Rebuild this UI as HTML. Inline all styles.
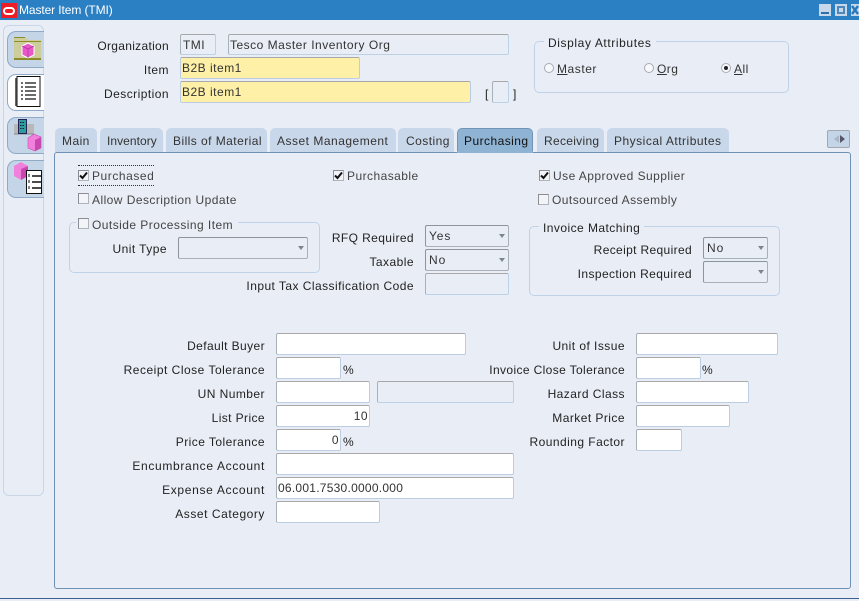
<!DOCTYPE html>
<html><head><meta charset="utf-8"><style>
html,body{margin:0;padding:0}
body{width:859px;height:601px;overflow:hidden;position:relative;background:#e9eef6;font:12px/14px "Liberation Sans",sans-serif;color:#222;letter-spacing:.45px}
div,span,svg{position:absolute;box-sizing:border-box}
.l{white-space:nowrap;text-align:right;height:14px}
.t{white-space:nowrap;height:14px}
.f{background:#fff;border:1px solid #bccde3;border-top-color:#a8a8a8;border-left-color:#a8b0b8;border-radius:2px;height:22px;padding:3px 2px;white-space:nowrap;color:#333}
.ro{background:#e9eef6;border-color:#bcd0e6;border-top-color:#a8a8a8;border-left-color:#a8b0b8;color:#333}
.y{background:#fff0a8;border-color:#bccde3;border-top-color:#a8a8a8;padding-left:1px;letter-spacing:.5px}
.s{background:#e9eef6;border:1px solid #a8b0b8;border-left-color:#8c949c;border-top-color:#8c949c;border-radius:2px;height:22px;padding:3px 3px;color:#333;letter-spacing:.9px}
.s:after{content:"";position:absolute;right:3px;top:8px;border:3.500px solid transparent;border-top:4px solid #7c8490;border-bottom:0}
.g{border:1px solid #c0d2e8;border-radius:5px}
.tab{top:128px;height:24px;background:#c8d7e9;border-radius:5px 5px 0 0;padding-top:6px;padding-left:7px;color:#333;white-space:nowrap}
.c{width:11px;height:11px;background:#f2f4f8;border:1px solid #b0b4ba;border-top-color:#8a8e94;border-left-color:#8a8e94}
.c.o svg{left:0;top:0}
.r{width:10px;height:10px;border-radius:50%;background:#f6f8fb;border:1px solid #a8acb2}
.st{left:7px;width:37px;height:37px;background:#c5d5e8;border:1px solid #8fa9c6;border-right:0;border-radius:9px 0 0 9px}
.lb{color:#444}
u{text-decoration:underline}
</style></head><body>
<!-- title bar -->
<div style="left:0;top:0;width:859px;height:20px;background:#2b80c3"></div>
<div style="left:1px;top:3px;width:16px;height:15px;background:#ee1c25"></div>
<div style="left:3px;top:7px;width:12px;height:8px;border:2px solid #fff;border-radius:4px"></div>
<div class="t" style="left:19px;top:3px;color:#fff;letter-spacing:-.1px">Master Item (TMI)</div>
<div style="left:819px;top:4px;width:12px;height:12px;background:#c8d8ea"></div>
<div style="left:821px;top:12px;width:8px;height:2px;background:#2b70aa"></div>
<div style="left:835px;top:4px;width:12px;height:12px;background:#c8d8ea"></div>
<div style="left:837px;top:6px;width:8px;height:8px;border:2px solid #4c88bc"></div>
<div style="left:851px;top:4px;width:8px;height:12px;background:#c8d8ea"></div>
<svg style="left:851px;top:4px" width="8" height="12"><path d="M1 2L7 10M7 2L1 10" stroke="#2b78b8" stroke-width="2.400"/></svg>

<!-- side rail -->
<div style="left:3px;top:25px;width:41px;height:471px;border:1px solid #c8d6e8;border-radius:6px"></div>
<div class="st" style="top:31px"></div>
<div class="st" style="top:74px;background:#fff"></div>
<div class="st" style="top:117px"></div>
<div class="st" style="top:160px;height:38px"></div>
<svg style="left:0;top:25px" width="44" height="180" viewBox="0 25 44 180">
<path d="M14 60V37h12l2 3h13v20z" fill="#cdcd9c"/><path d="M14 37.500h11M14 41.500h27" stroke="#8c8c28" fill="none"/><rect x="14" y="58" width="27" height="2" fill="#8c8c28"/>
<path d="M22 46l6-3 6 3v9l-6 3-6-3z" fill="#e858c8" stroke="#fff"/><path d="M28 49v9M22 46l6 3 6-3" stroke="#b030a0" fill="none" stroke-width=".7"/>
<rect x="15" y="78" width="2" height="28" fill="#666"/><rect x="17" y="76.500" width="23" height="30" fill="#fff" stroke="#111"/>
<path d="M21 83h2M25 83h11M21 87h2M25 87h11M21 91h2M25 91h11M21 95h2M25 95h11M21 99h2M25 99h11" stroke="#111" stroke-width="1.200"/>
<rect x="14" y="124" width="6" height="10" fill="#b8b8b8"/><rect x="26" y="124" width="8" height="10" fill="#b8b8b8"/><path d="M14 134h20" stroke="#888"/>
<rect x="18.500" y="119.500" width="8" height="14" fill="#2e9c9c" stroke="#225"/><path d="M20 122.500h5M20 125.500h5M20 128.500h5" stroke="#123" stroke-dasharray="1.500 1"/>
<path d="M28 138l6-4 7 3v11l-6 3-7-3z" fill="#f080dc" stroke="#c850b0" stroke-width=".6"/><path d="M35 140v11l6-3v-11z" fill="#c848b0"/>
<path d="M14 166l7-4 7 4v10l-7 4-7-4z" fill="#f080dc"/><path d="M21 169v11l7-4v-10z" fill="#c848b0"/>
<rect x="26.500" y="170.500" width="15" height="23" fill="#fff" stroke="#111"/><path d="M32 176h9M32 182h9M32 188h9" stroke="#111" stroke-width="1.500"/><path d="M29 174v3M29 180v3M29 186v3" stroke="#111"/>
</svg>

<!-- header -->
<div class="l" style="right:690px;top:39px;letter-spacing:.3px">Organization</div>
<div class="f ro" style="left:180px;top:34px;width:36px;height:21px">TMI</div>
<div class="f ro" style="left:228px;top:34px;width:281px;height:21px;padding-left:1px;letter-spacing:.5px">Tesco Master Inventory Org</div>
<div class="l" style="right:690px;top:63px">Item</div>
<div class="f y" style="left:180px;top:57px;width:180px">B2B item1</div>
<div class="l" style="right:690px;top:87px">Description</div>
<div class="f y" style="left:180px;top:81px;width:291px">B2B item1</div>
<div class="t" style="left:485px;top:87px">[</div>
<div class="f ro" style="left:492px;top:81px;width:17px"></div>
<div class="t" style="left:513px;top:87px">]</div>

<div class="g" style="left:534px;top:41px;width:255px;height:52px"></div>
<div class="t" style="left:544px;top:36px;background:#e9eef6;padding:0 4px;letter-spacing:.6px">Display Attributes</div>
<div class="r" style="left:544px;top:63px"></div><div class="t" style="left:557px;top:62px;color:#333;letter-spacing:.55px"><u>M</u>aster</div>
<div class="r" style="left:644px;top:63px"></div><div class="t" style="left:657px;top:62px;color:#333"><u>O</u>rg</div>
<div class="r" style="left:721px;top:63px"></div><div style="left:724px;top:66px;width:4px;height:4px;border-radius:50%;background:#222"></div><div class="t" style="left:734px;top:62px;color:#333"><u>A</u>ll</div>

<!-- tabs -->
<div class="tab" style="left:55px;width:42px">Main</div>
<div class="tab" style="left:100px;width:63px;letter-spacing:.05px">Inventory</div>
<div class="tab" style="left:166px;width:101px">Bills of Material</div>
<div class="tab" style="left:270px;width:126px;letter-spacing:.5px">Asset Management</div>
<div class="tab" style="left:398px;width:56px;padding-left:8px">Costing</div>
<div class="tab" style="left:457px;width:76px;background:#8fb3d3;color:#111;border:1px solid #6f94b8;border-bottom:0;padding-top:5px;padding-left:6px">Purchasing</div>
<div class="tab" style="left:537px;width:67px;letter-spacing:.3px">Receiving</div>
<div class="tab" style="left:607px;width:122px;letter-spacing:.5px">Physical Attributes</div>
<div style="left:827px;top:130px;width:23px;height:18px;background:#c5d5e8;border:1px solid #a0a8b0;border-radius:2px"></div>
<svg style="left:827px;top:130px" width="23" height="18"><path d="M12 5v8l-5-4z" fill="#a8b8c8"/><path d="M13 5v8l5-4z" fill="#556"/></svg>

<!-- panel -->
<div style="left:54px;top:152px;width:797px;height:437px;border:1px solid #6e90b4;border-radius:3px"></div>
<div style="left:457px;top:151px;width:76px;height:2px;background:#8fb3d3"></div>

<div style="left:78px;top:165px;width:76px;height:21px;border-top:1px dotted #333;border-bottom:1px dotted #333"></div>
<div class="c o" style="left:78px;top:170px"><svg width="9" height="9"><path d="M1 4.500l2.500 2.500L8 1.500" fill="none" stroke="#111" stroke-width="2"/></svg></div>
<div class="t lb" style="left:92px;top:169px;letter-spacing:.55px">Purchased</div>
<div class="c o" style="left:333px;top:170px"><svg width="9" height="9"><path d="M1 4.500l2.500 2.500L8 1.500" fill="none" stroke="#111" stroke-width="2"/></svg></div>
<div class="t lb" style="left:347px;top:169px">Purchasable</div>
<div class="c o" style="left:539px;top:170px"><svg width="9" height="9"><path d="M1 4.500l2.500 2.500L8 1.500" fill="none" stroke="#111" stroke-width="2"/></svg></div>
<div class="t lb" style="left:553px;top:169px">Use Approved Supplier</div>
<div class="c" style="left:78px;top:193px"></div>
<div class="t lb" style="left:92px;top:193px">Allow Description Update</div>
<div class="c" style="left:538px;top:194px"></div>
<div class="t lb" style="left:552px;top:193px">Outsourced Assembly</div>

<div class="g" style="left:69px;top:222px;width:251px;height:51px"></div>
<div style="left:76px;top:216px;width:162px;height:14px;background:#e9eef6"></div>
<div class="c" style="left:78px;top:218px"></div>
<div class="t lb" style="left:92px;top:218px">Outside Processing Item</div>
<div class="l" style="right:692px;top:242px">Unit Type</div>
<div class="s" style="left:178px;top:237px;width:130px"></div>

<div class="l" style="right:445px;top:231px;letter-spacing:.4px">RFQ Required</div>
<div class="s" style="left:425px;top:225px;width:84px">Yes</div>
<div class="l" style="right:445px;top:255px">Taxable</div>
<div class="s" style="left:425px;top:249px;width:84px">No</div>
<div class="l" style="right:445px;top:279px">Input Tax Classification Code</div>
<div class="f ro" style="left:425px;top:273px;width:84px"></div>

<div class="g" style="left:529px;top:226px;width:251px;height:70px"></div>
<div class="t" style="left:539px;top:221px;background:#e9eef6;padding:0 4px">Invoice Matching</div>
<div class="l" style="right:167px;top:243px;letter-spacing:.35px">Receipt Required</div>
<div class="s" style="left:703px;top:237px;width:65px">No</div>
<div class="l" style="right:167px;top:267px;letter-spacing:.4px">Inspection Required</div>
<div class="s" style="left:703px;top:261px;width:65px"></div>

<!-- lower left -->
<div class="l" style="right:594px;top:339px;letter-spacing:.4px">Default Buyer</div>
<div class="f" style="left:276px;top:333px;width:190px"></div>
<div class="l" style="right:594px;top:363px;letter-spacing:.5px">Receipt Close Tolerance</div>
<div class="f" style="left:276px;top:357px;width:65px"></div>
<div class="t" style="left:343px;top:363px">%</div>
<div class="l" style="right:594px;top:387px">UN Number</div>
<div class="f" style="left:276px;top:381px;width:94px"></div>
<div class="f ro" style="left:377px;top:381px;width:137px"></div>
<div class="l" style="right:594px;top:411px;letter-spacing:.4px">List Price</div>
<div class="f" style="left:276px;top:405px;width:94px;text-align:right;padding-right:1px">10</div>
<div class="l" style="right:594px;top:435px">Price Tolerance</div>
<div class="f" style="left:276px;top:429px;width:65px;text-align:right;padding-right:1px">0</div>
<div class="t" style="left:343px;top:435px">%</div>
<div class="l" style="right:594px;top:459px;letter-spacing:.66px">Encumbrance Account</div>
<div class="f" style="left:276px;top:453px;width:238px"></div>
<div class="l" style="right:594px;top:483px;letter-spacing:.68px">Expense Account</div>
<div class="f" style="left:276px;top:477px;width:238px;padding-left:1px;letter-spacing:.25px">06.001.7530.0000.000</div>
<div class="l" style="right:594px;top:507px;letter-spacing:.55px">Asset Category</div>
<div class="f" style="left:276px;top:501px;width:104px"></div>

<!-- lower right -->
<div class="l" style="right:234px;top:339px">Unit of Issue</div>
<div class="f" style="left:636px;top:333px;width:142px"></div>
<div class="l" style="right:234px;top:363px;letter-spacing:.37px">Invoice Close Tolerance</div>
<div class="f" style="left:636px;top:357px;width:65px"></div>
<div class="t" style="left:702px;top:363px">%</div>
<div class="l" style="right:234px;top:387px">Hazard Class</div>
<div class="f" style="left:636px;top:381px;width:113px"></div>
<div class="l" style="right:234px;top:411px">Market Price</div>
<div class="f" style="left:636px;top:405px;width:94px"></div>
<div class="l" style="right:234px;top:435px">Rounding Factor</div>
<div class="f" style="left:636px;top:429px;width:46px"></div>

<div style="left:0;top:598px;width:859px;height:1px;background:#3c5f90"></div>
</body></html>
